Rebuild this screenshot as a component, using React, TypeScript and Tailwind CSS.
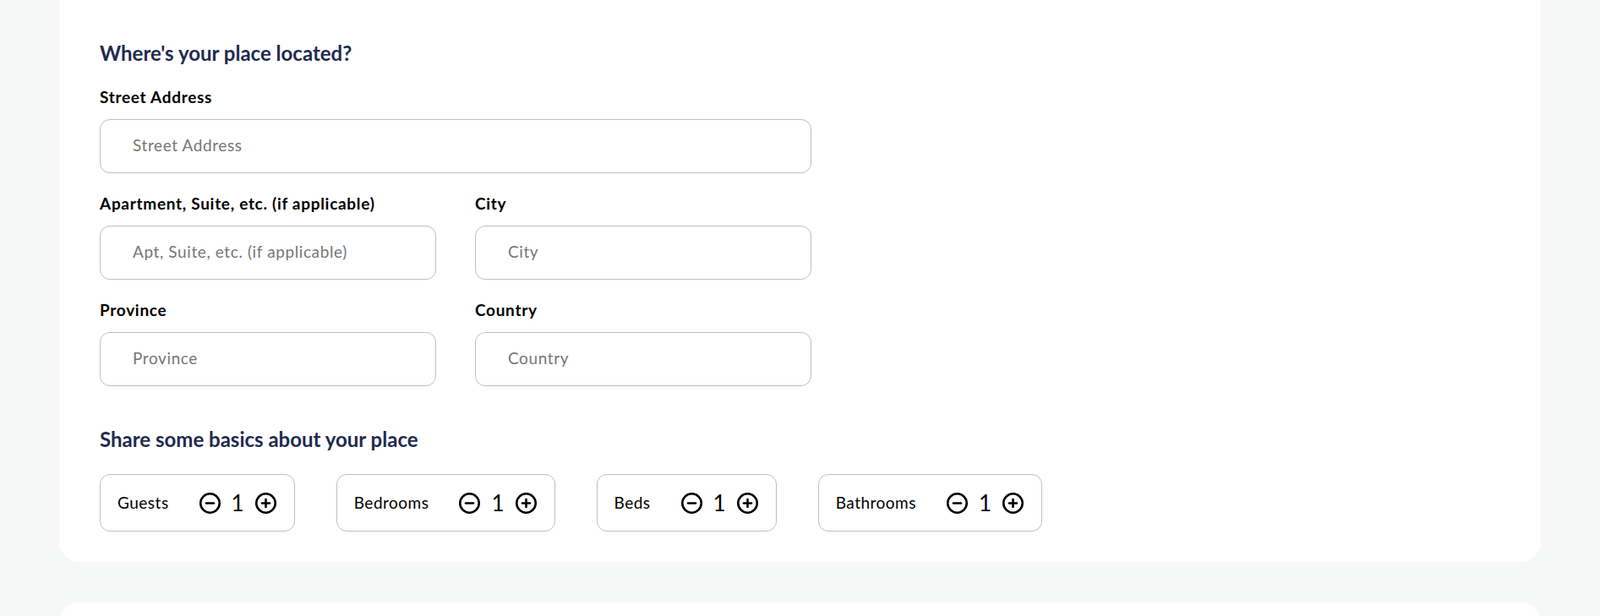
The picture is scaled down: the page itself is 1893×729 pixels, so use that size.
import { CircleMinus, CirclePlus } from "lucide-react";

const counters = [
  { label: "Guests", value: 1 },
  { label: "Bedrooms", value: 1 },
  { label: "Beds", value: 1 },
  { label: "Bathrooms", value: 1 },
];

function Field({ label, placeholder }: { label: string; placeholder: string }) {
  return (
    <div className="flex flex-col">
      <label className="text-[19px] leading-7 font-bold tracking-[0.7px] text-black mb-3">{label}</label>
      <input
        className="h-16 w-full rounded-xl border border-[#bfbfbf] bg-white px-[38px] pb-[3px] text-[19px] tracking-[0.6px] text-black placeholder:text-[#767676] focus:outline-none"
        type="text"
        placeholder={placeholder}
      />
    </div>
  );
}

function App() {
  return (
    <div
      className="min-h-[729px] bg-[#f6f7f7] px-[70px]"
      style={{ fontFamily: "Lato, 'Noto Sans', sans-serif" }}
    >
      <div className="bg-white rounded-b-3xl pl-12 pt-[47px] pb-9">
        <div className="w-[842px] flex flex-col gap-[22px]">
          <h2 className="text-[24px] leading-8 font-bold text-[#1e2b50]">Where's your place located?</h2>
          <Field label="Street Address" placeholder="Street Address" />
          <div className="grid grid-cols-2 gap-x-[46px] gap-y-[22px]">
            <Field label="Apartment, Suite, etc. (if applicable)" placeholder="Apt, Suite, etc. (if applicable)" />
            <Field label="City" placeholder="City" />
            <Field label="Province" placeholder="Province" />
            <Field label="Country" placeholder="Country" />
          </div>
        </div>

        <h2 className="mt-[47px] text-[24px] leading-8 font-bold text-[#1e2b50]">
          Share some basics about your place
        </h2>
        <div className="mt-[25px] flex gap-[49px]">
          {counters.map((c) => (
            <div
              key={c.label}
              className="h-[68px] flex items-center gap-[35px] rounded-xl border border-[#bfbfbf] px-5"
            >
              <span className="text-[19px] tracking-[0.5px] text-black">{c.label}</span>
              <div className="flex items-center gap-3">
                <button type="button" className="text-black">
                  <CircleMinus size={27} strokeWidth={2.3} />
                </button>
                <span className="text-[26px] leading-none text-black">{c.value}</span>
                <button type="button" className="text-black">
                  <CirclePlus size={27} strokeWidth={2.3} />
                </button>
              </div>
            </div>
          ))}
        </div>
      </div>

      <div className="mt-12 bg-white rounded-3xl h-[200px]" />
    </div>
  );
}

export default App;
